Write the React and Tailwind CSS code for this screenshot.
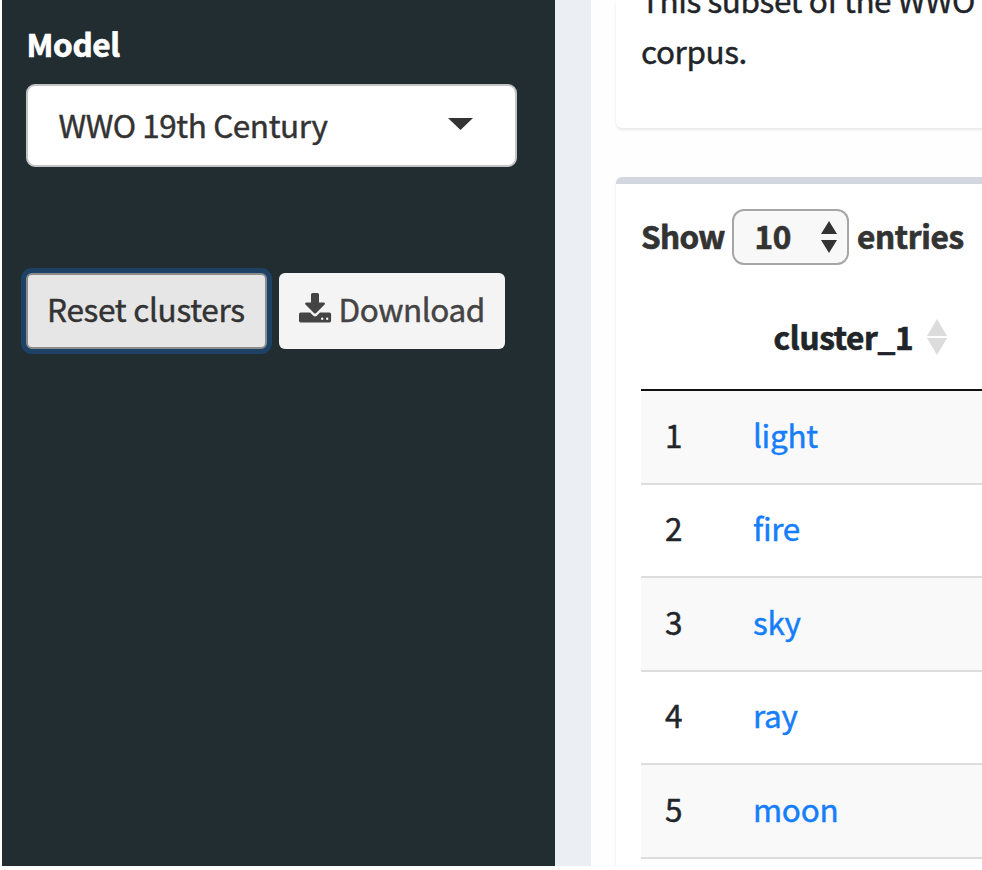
import React from "react";

const words = ["light", "fire", "sky", "ray", "moon"];

function DownloadIcon() {
  return (
    <svg className="-mt-[7px] mr-[6px] h-[30px] w-[33px] shrink-0" viewBox="0 0 33 30" fill="#444">
      <path d="M13.500 0h5a1.500 1.500 0 0 1 1.500 1.500V9.500h4.700c1.200 0 1.700 1.300.9 2.100L17.200 20a1.600 1.600 0 0 1-2.300 0L6.500 11.600c-.8-.8-.3-2.100.9-2.100H12V1.500A1.500 1.500 0 0 1 13.500 0z" />
      <path
        fillRule="evenodd"
        d="M1.700 19.500h9.400l3 2.900a2.700 2.700 0 0 0 3.900 0l3-2.900h9.400a1.700 1.700 0 0 1 1.700 1.700v6.500a1.700 1.700 0 0 1-1.700 1.700H1.700A1.700 1.700 0 0 1 0 27.700v-6.500a1.700 1.700 0 0 1 1.700-1.700zM22 25.700a1.200 1.200 0 1 0 2.400 0 1.200 1.200 0 0 0-2.400 0zm5 0a1.200 1.200 0 1 0 2.400 0 1.200 1.200 0 0 0-2.400 0z"
      />
    </svg>
  );
}

function Sidebar() {
  return (
    <aside className="ml-[2px] h-full w-[552.6px] shrink-0 bg-[#222d32] pl-[24.4px]">
      <div className="h-[84px] pt-[23px] font-bold leading-[40px] text-white [-webkit-text-stroke:0.7px_currentColor]">
        Model
      </div>
      <div className="flex h-[83px] w-[491px] items-center justify-between rounded-[9px] border-2 border-[#c4c4c4] bg-white pl-[30px] pr-[42px] text-[#333]">
        <span className="-mt-[4px] leading-[40px] tracking-[-0.42px]">WWO 19th Century</span>
        <svg className="-mt-[3px] h-[12px] w-[25px]" viewBox="0 0 25 12" fill="#333">
          <path d="M0 0h25L12.500 12z" />
        </svg>
      </div>
      <div className="mt-[106px] flex gap-[12px]">
        <button className="flex h-[76px] w-[241px] items-center justify-center rounded-[6px] border-2 border-[#8c8c8c] bg-[#e6e6e6] text-[#333] ring-[5px] ring-[#1d4266]">
          <span className="-mt-[7px] mr-[2px] leading-[40px]">Reset clusters</span>
        </button>
        <button className="flex h-[76px] w-[226px] items-center rounded-[6px] bg-[#f4f4f4] pl-[20px] text-[#444]">
          <DownloadIcon />
          <span className="-mt-[7px] leading-[40px] tracking-[-0.42px]">Download</span>
        </button>
      </div>
    </aside>
  );
}

function Card({ className, children }) {
  return (
    <section
      className={
        "flex w-[500px] shrink-0 flex-col bg-white pl-[25px] shadow-[0_2px_3px_rgba(0,0,0,0.09)] " + className
      }
    >
      {children}
    </section>
  );
}

export default function App() {
  return (
    <div className="h-[870px] w-[982px] overflow-hidden bg-white font-['Noto_Sans_CJK_SC','Noto_Sans',sans-serif] text-[31.5px] tracking-[-0.3px]">
      <div className="flex h-[866px] overflow-hidden whitespace-nowrap [-webkit-text-stroke:0.45px_currentColor]">
        <Sidebar />
        <div className="h-full w-[36.700px] shrink-0 bg-[#ebeff4]" />
        <main className="h-full min-w-0 flex-1 overflow-hidden bg-[#fefefe] pl-[24.700px]">
          <Card className="h-[128px] rounded-b-[6px] text-[#212529]">
            <p className="-mt-[26px] leading-[51px] tracking-[-0.4px]">
              This subset of the WWO
              <br />
              corpus.
            </p>
          </Card>
          <Card className="mt-[49px] h-[760px] rounded-t-[6px] border-t-[7px] border-[#d1d6df]">
            <div className="mt-[25px] flex h-[56px] shrink-0 items-center font-bold text-[#333] [-webkit-text-stroke:0.7px_currentColor]">
              <span className="-mt-[4px] w-[91px] tracking-[-0.7px] leading-[40px]">Show</span>
              <div className="flex h-[56px] w-[117px] items-center justify-between rounded-[12px] border-2 border-[#a6a6a6] bg-[#f8f8f8] pl-[20.500px] pr-[10px]">
                <span className="-mt-[4px] leading-[40px]">10</span>
                <svg className="h-[32px] w-[16px]" viewBox="0 0 16 32" fill="#333">
                  <path d="M8 0l8 13H0zM0 19h16L8 32z" />
                </svg>
              </div>
              <span className="-mt-[4px] ml-[8px] leading-[40px]">entries</span>
            </div>
            <div className="flex h-[126px] shrink-0 items-center border-b-2 border-[#111] pl-[132.500px] pt-[18px] font-bold text-[#212529] [-webkit-text-stroke:0.7px_currentColor]">
              <span className="leading-[40px]">cluster_1</span>
              <svg className="ml-[14px] mt-[2px] h-[36px] w-[20px]" viewBox="0 0 20 36" fill="#dcdcdc">
                <path d="M10 0l10 17H0zM0 19h20L10 36z" />
              </svg>
            </div>
            {words.map((word, i) => (
              <div
                key={word}
                className={
                  "flex h-[93.500px] shrink-0 items-center border-b-2 border-[#ddd] pl-[24px] " +
                  (i % 2 === 0 ? "bg-[#f9f9f9]" : "bg-white")
                }
              >
                <span className="-mt-[6px] w-[88px] leading-[40px] text-[#212529]">{i + 1}</span>
                <a className="-mt-[6px] leading-[40px] text-[#167efb]">{word}</a>
              </div>
            ))}
          </Card>
        </main>
      </div>
    </div>
  );
}
